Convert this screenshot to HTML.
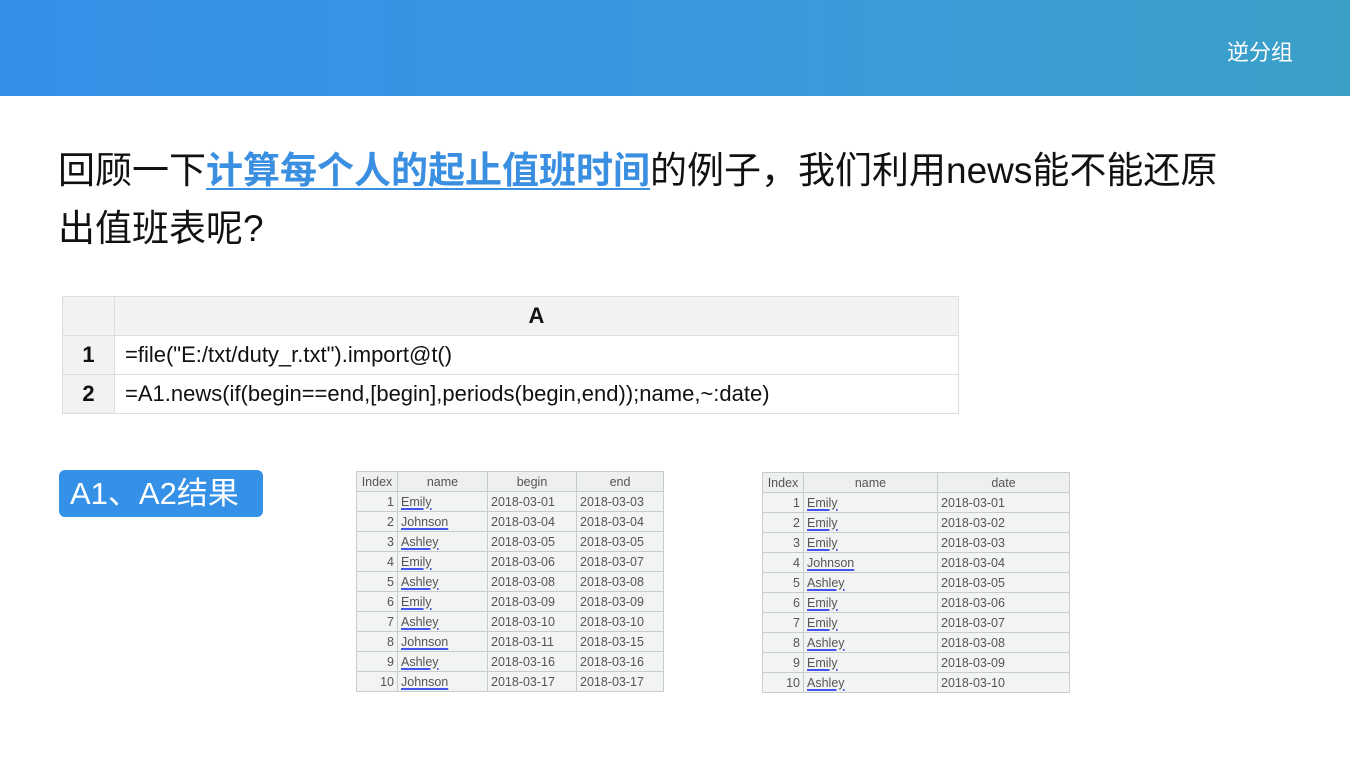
<!DOCTYPE html>
<html><head><meta charset="utf-8"><style>
body{margin:0;width:1350px;height:759px;background:#fff;position:relative;overflow:hidden;font-family:"Liberation Sans","Noto Sans CJK SC",sans-serif}
.hdr{position:absolute;left:0;top:0;width:1350px;height:96px;background:linear-gradient(90deg,#3590e8 0%,#3794e4 35%,#3a9bd8 65%,#3aa0c8 100%)}
.hdr span{position:absolute;right:57px;top:35px;color:#fff;font-size:22px}
.t{position:absolute;left:58px;font-size:37px;color:#111;white-space:nowrap}
.t b{color:#3b8fe0;text-decoration:underline;text-decoration-thickness:2px;text-underline-offset:5px}
table{border-collapse:collapse;position:absolute}
.code{left:62px;top:296px;width:897px}
.code td{border:1px solid #ddd;height:38px;font-size:22px;color:#111;padding:0 10px}
.code td.n{width:31px;background:#f2f2f2;text-align:center;font-weight:bold}
.code tr:first-child td{background:#f2f2f2;text-align:center;font-weight:bold}
.badge{position:absolute;left:59px;top:470px;width:204px;height:47px;background:#3590e8;border-radius:6px;color:#fff;font-size:31px;line-height:47px;text-indent:11px;white-space:nowrap}
.s td{border:1px solid #c8cccc;background:#f2f3f3;height:19px;padding:0 3px;font-size:12.5px;color:#555;line-height:18px}
.s tr:first-child td{text-align:center;background:#eef0f0}
.s td.i{text-align:right}
.s u{text-decoration-color:#4455ee;text-decoration-thickness:2px;text-underline-offset:2px;color:#555}
</style></head><body>
<div class="hdr"><span>逆分组</span></div>
<div class="t" style="top:140px">回顾一下<b>计算每个人的起止值班时间</b>的例子，我们利用news能不能还原</div>
<div class="t" style="top:198px">出值班表呢?</div>
<table class="code">
<tr><td class="n"></td><td>A</td></tr>
<tr><td class="n">1</td><td>=file("E:/txt/duty_r.txt").import@t()</td></tr>
<tr><td class="n">2</td><td>=A1.news(if(begin==end,[begin],periods(begin,end));name,~:date)</td></tr>
</table>
<div class="badge">A1、A2结果</div>
<table class="s" style="left:356px;top:471px;width:308px">
<tr><td style="width:34px">Index</td><td style="width:83px">name</td><td style="width:82px">begin</td><td>end</td></tr>
<tr><td class="i">1</td><td><u>Emily</u></td><td>2018-03-01</td><td>2018-03-03</td></tr>
<tr><td class="i">2</td><td><u>Johnson</u></td><td>2018-03-04</td><td>2018-03-04</td></tr>
<tr><td class="i">3</td><td><u>Ashley</u></td><td>2018-03-05</td><td>2018-03-05</td></tr>
<tr><td class="i">4</td><td><u>Emily</u></td><td>2018-03-06</td><td>2018-03-07</td></tr>
<tr><td class="i">5</td><td><u>Ashley</u></td><td>2018-03-08</td><td>2018-03-08</td></tr>
<tr><td class="i">6</td><td><u>Emily</u></td><td>2018-03-09</td><td>2018-03-09</td></tr>
<tr><td class="i">7</td><td><u>Ashley</u></td><td>2018-03-10</td><td>2018-03-10</td></tr>
<tr><td class="i">8</td><td><u>Johnson</u></td><td>2018-03-11</td><td>2018-03-15</td></tr>
<tr><td class="i">9</td><td><u>Ashley</u></td><td>2018-03-16</td><td>2018-03-16</td></tr>
<tr><td class="i">10</td><td><u>Johnson</u></td><td>2018-03-17</td><td>2018-03-17</td></tr>
</table>
<table class="s" style="left:762px;top:472px;width:308px">
<tr><td style="width:34px">Index</td><td style="width:127px">name</td><td>date</td></tr>
<tr><td class="i">1</td><td><u>Emily</u></td><td>2018-03-01</td></tr>
<tr><td class="i">2</td><td><u>Emily</u></td><td>2018-03-02</td></tr>
<tr><td class="i">3</td><td><u>Emily</u></td><td>2018-03-03</td></tr>
<tr><td class="i">4</td><td><u>Johnson</u></td><td>2018-03-04</td></tr>
<tr><td class="i">5</td><td><u>Ashley</u></td><td>2018-03-05</td></tr>
<tr><td class="i">6</td><td><u>Emily</u></td><td>2018-03-06</td></tr>
<tr><td class="i">7</td><td><u>Emily</u></td><td>2018-03-07</td></tr>
<tr><td class="i">8</td><td><u>Ashley</u></td><td>2018-03-08</td></tr>
<tr><td class="i">9</td><td><u>Emily</u></td><td>2018-03-09</td></tr>
<tr><td class="i">10</td><td><u>Ashley</u></td><td>2018-03-10</td></tr>
</table>
</body></html>
